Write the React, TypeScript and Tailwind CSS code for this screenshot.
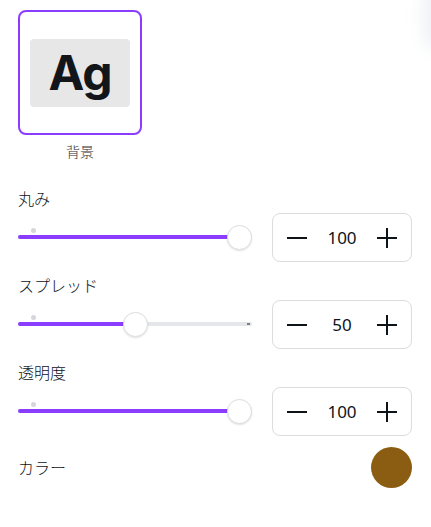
import React from "react";

const PURPLE = "#8b3dff";

interface SliderRowProps {
  label: string;
  value: number;
  max: number;
  showEnd?: boolean;
}

const Minus = () => (
  <svg width="20" height="20" viewBox="0 0 20 20" fill="none">
    <path d="M0 10h20" stroke="#0e1318" strokeWidth="2" />
  </svg>
);

const Plus = () => (
  <svg width="20" height="20" viewBox="0 0 20 20" fill="none">
    <path d="M0 10h20M10 0v20" stroke="#0e1318" strokeWidth="2" />
  </svg>
);

const SliderRow: React.FC<SliderRowProps> = ({ label, value, max, showEnd }) => {
  const pct = value / max;
  const thumbLeft = `calc(${pct} * (100% - 25px))`;
  const fillWidth = `calc(${pct} * (100% - 25px) + 12.5px)`;
  return (
    <div className="flex flex-col">
      <div className="h-6 text-[16px] font-light leading-6 text-[#0e1318]">{label}</div>
      <div className="mt-[2px] flex items-center gap-5">
        <div className="relative h-[49px] flex-1">
          {/* default marker */}
          <div className="absolute left-[13px] top-[15px] h-[5px] w-[5px] rounded-full bg-[#d5d7db]" />
          {/* track */}
          <div className="absolute left-0 right-0 top-[22px] h-[4px] rounded-full bg-[#e4e6ea]" />
          {showEnd && <div className="absolute right-[2px] top-[23px] h-[2px] w-[3px] bg-[#7d8187]" />}
          <div className="absolute left-0 top-[22px] h-[4px] rounded-full" style={{ width: fillWidth, backgroundColor: PURPLE }} />
          {/* thumb */}
          <div
            className="absolute top-[11.5px] h-[25px] w-[25px] rounded-full border border-[#dcdee2] bg-white shadow-[0_1px_2px_rgba(0,0,0,0.12)]"
            style={{ left: thumbLeft }}
          />
        </div>
        <div className="flex h-[49px] w-[140px] items-center justify-between rounded-[8px] border border-[#dadcdf] px-[14px]">
          <Minus />
          <span className="text-[17px] text-[#0e1318]">{value}</span>
          <Plus />
        </div>
      </div>
    </div>
  );
};

export default function App() {
  return (
    <div className="relative h-[527px] w-[431px] overflow-hidden bg-white pl-[18px] pr-[19px] pt-[10px] font-['Noto_Sans','Noto_Sans_CJK_JP',sans-serif]">
      <div className="pointer-events-none absolute right-[-28px] top-[-20px] h-[70px] w-[36px] rounded-full bg-[#eef1f6] blur-[8px]" />

      <div className="flex w-[124px] flex-col items-center">
        <div className="flex h-[125px] w-[124px] items-center justify-center rounded-[8px] border-2 border-[#8b3dff] bg-white">
          <div className="flex h-[68px] w-[100px] items-center justify-center rounded-[4px] bg-[#e7e7e8]">
            <span className="font-['Inter',sans-serif] text-[48px] font-bold leading-none tracking-[-1px] text-[#12161b]">Ag</span>
          </div>
        </div>
        <div className="mt-[7px] h-5 text-[14px] font-light leading-5 text-[#2d3035]">背景</div>
      </div>

      <div className="mt-[25px] flex flex-col gap-[12px]">
        <SliderRow label="丸み" value={100} max={100} />
        <SliderRow label="スプレッド" value={50} max={100} showEnd />
        <SliderRow label="透明度" value={100} max={100} />
      </div>

      <div className="mt-[11px] flex items-center justify-between">
        <span className="text-[16px] font-light text-[#0e1318]">カラー</span>
        <div className="h-[41px] w-[41px] rounded-full bg-[#8b5d12]" />
      </div>
    </div>
  );
}
